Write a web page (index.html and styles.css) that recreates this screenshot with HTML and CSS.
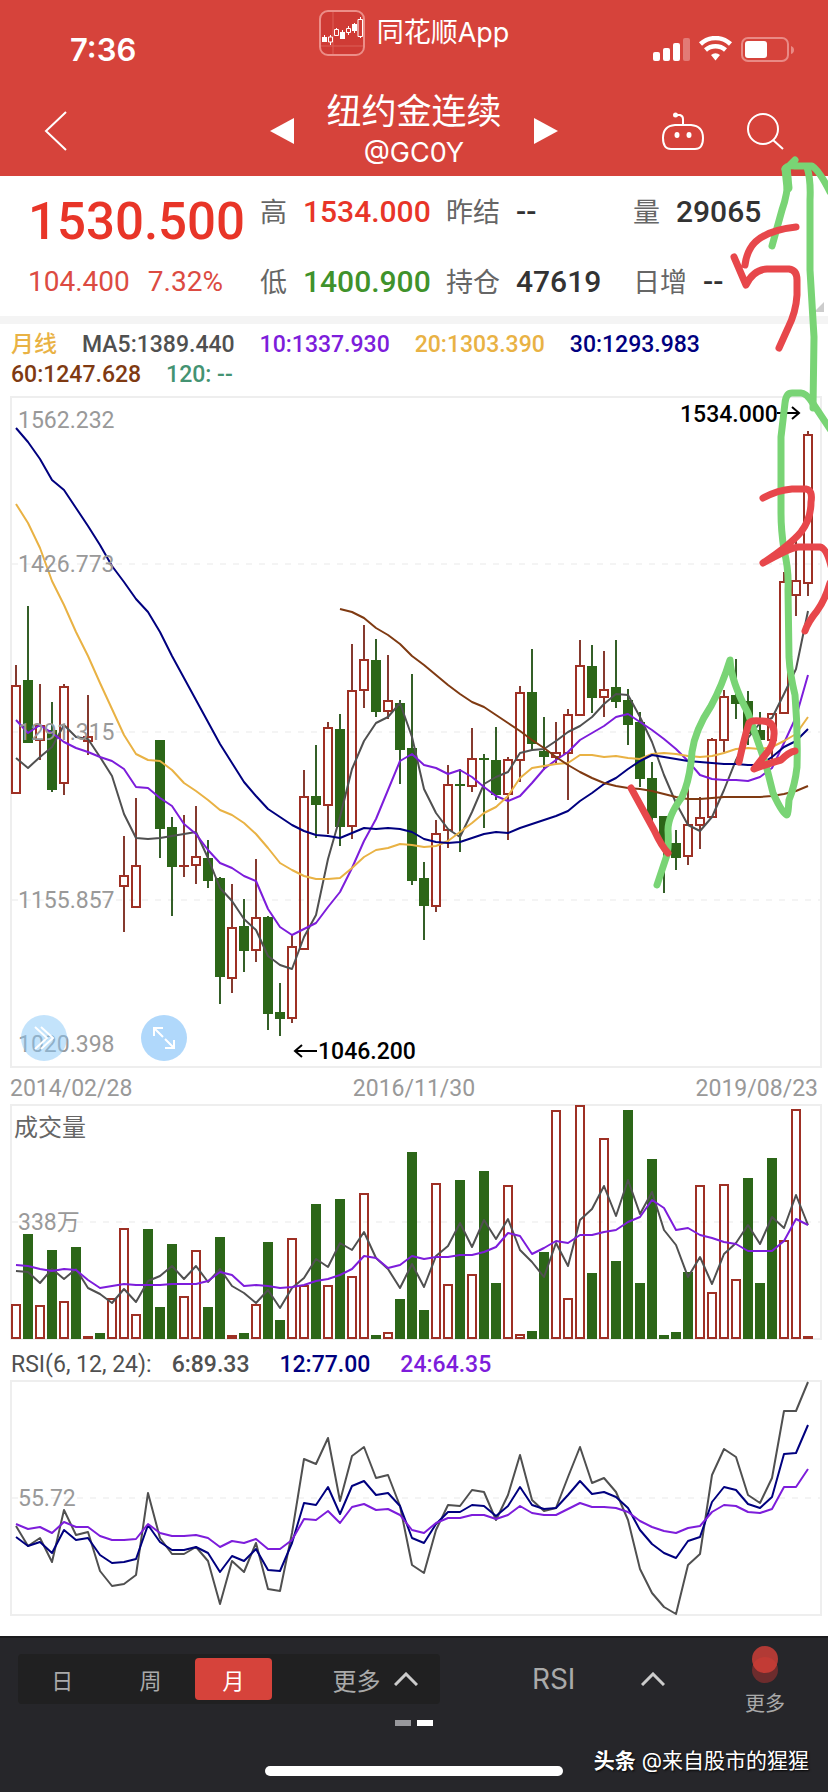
FILE: index.html
```html
<!doctype html>
<html lang="zh-CN">
<head>
  <meta charset="utf-8">
  <meta name="viewport" content="width=device-width, initial-scale=1">
  <title>纽约金连续</title>
  <link rel="stylesheet" href="styles.css">
</head>
<body>
<div class="page">

  <header class="header">
    <div class="status">
      <span class="clock">7:36</span>
      <div class="brand">
        <svg class="brand-icon" viewBox="0 0 46 46" width="46" height="46">
          <rect x="1" y="1" width="44" height="44" rx="8" fill="#cf3b35" stroke="#ec8e88" stroke-width="2"/>
          <path d="M14 2v42M2 36h42" stroke="#dc6059" stroke-width="1"/>
          <path d="M5.500 25v7M11.500 25v10M17.500 18v8M23.500 20v9M29.500 16v9M35.500 13v10M41.500 7v21" stroke="#fff" stroke-width="1"/>
          <path d="M3 27h5v5h-5zM21 22h5v7h-5zM33 14h5v7h-5z" fill="#fff"/>
          <path d="M9.500 27h4v5h-4zM15.500 19.500h4v6h-4zM27.500 18.500h4v4h-4zM39 9.500h4.500v17h-4.500z" fill="#cf3b35" stroke="#fff" stroke-width="1"/>
        </svg>
        <span>同花顺App</span>
      </div>
      <svg class="status-icons" viewBox="0 0 142 28" width="142" height="28">
        <g fill="#fff">
          <rect x="1" y="16" width="7" height="9" rx="2"/>
          <rect x="11" y="12" width="7" height="13" rx="2"/>
          <rect x="21" y="7" width="7" height="18" rx="2"/>
          <rect x="31" y="2" width="7" height="23" rx="2" opacity=".3"/>
          <path d="M59 19a7 7 0 0 1 9 0l-4.500 5.500z"/>
        </g>
        <path d="M48.500 9a22 22 0 0 1 30 0M53.500 15a15 15 0 0 1 20 0" transform="translate(0 -1)" fill="none" stroke="#fff" stroke-width="4.500"/>
        <rect x="90" y="2" width="46" height="23" rx="6" fill="none" stroke="#e98a85" stroke-width="2"/>
        <rect x="93" y="5" width="22" height="17" rx="3" fill="#fff"/>
        <path d="M139 10q3 1 3 4t-3 4z" fill="#e98a85"/>
      </svg>
    </div>
    <nav class="nav">
      <button class="icon-btn back" aria-label="返回">
        <svg viewBox="0 0 24 40" width="24" height="40"><path d="M22 1L2 20l20 19" fill="none" stroke="#fff" stroke-width="2"/></svg>
      </button>
      <div class="switcher">
        <button class="icon-btn" aria-label="上一个">
          <svg viewBox="0 0 24 26" width="24" height="26"><path d="M24 0v26L0 13z" fill="#fff"/></svg>
        </button>
        <div class="title">
          <h1>纽约金连续</h1>
          <span>@GC0Y</span>
        </div>
        <button class="icon-btn" aria-label="下一个">
          <svg viewBox="0 0 24 26" width="24" height="26"><path d="M0 0v26l24-13z" fill="#fff"/></svg>
        </button>
      </div>
      <div class="nav-right">
        <button class="icon-btn" aria-label="助手">
          <svg viewBox="0 0 42 38" width="42" height="38" fill="none" stroke="#fff" stroke-width="2">
            <path d="M21 13V7q0-3-3-4h-4M13 13h16q12 1 12 13 0 11-8 11H9Q1 37 1 26 1 14 13 13z"/>
            <circle cx="13.500" cy="3" r="2.500" fill="#fff" stroke="none"/>
            <ellipse cx="15" cy="23" rx="2.500" ry="3" fill="#fff" stroke="none"/>
            <ellipse cx="27" cy="23" rx="2.500" ry="3" fill="#fff" stroke="none"/>
          </svg>
        </button>
        <button class="icon-btn" aria-label="搜索">
          <svg viewBox="0 0 38 38" width="38" height="38" fill="none" stroke="#fff" stroke-width="2">
            <circle cx="17" cy="17" r="15"/><path d="M27 28l10 9"/>
          </svg>
        </button>
      </div>
    </nav>
  </header>

  <section class="quote">
    <div class="quote-main">
      <strong class="price">1530.500</strong>
      <div class="change"><span>104.400</span><span>7.32%</span></div>
    </div>
    <div class="quote-col">
      <div><span class="key">高</span><b class="up">1534.000</b></div>
      <div><span class="key">低</span><b class="down">1400.900</b></div>
    </div>
    <div class="quote-col">
      <div><span class="key">昨结</span><b>--</b></div>
      <div><span class="key">持仓</span><b>47619</b></div>
    </div>
    <div class="quote-col">
      <div><span class="key">量</span><b>29065</b></div>
      <div><span class="key">日增</span><b>--</b></div>
    </div>
    <i class="corner"></i>
  </section>

  <main>
    <div class="legend">
      <span class="c-gold">月线</span>
      <span class="c-gray">MA5:1389.440</span>
      <span class="c-purple">10:1337.930</span>
      <span class="c-gold">20:1303.390</span>
      <span class="c-navy">30:1293.983</span>
      <span class="c-brown">60:1247.628</span>
      <span class="c-teal">120: --</span>
    </div>

    <div class="chart-wrap">
      <svg class="chart" id="kline" viewBox="0 396 828 672">
        <rect class="frame" x="11" y="397" width="810" height="670"/>
        <path class="grid" d="M12 564H820M12 732H820M12 900H820"/>
        <g class="data"></g>
        <g class="label">
          <text x="18" y="428">1562.232</text>
          <text x="18" y="572">1426.773</text>
          <text x="18" y="740">1291.315</text>
          <text x="18" y="908">1155.857</text>
          <text x="18" y="1052">1020.398</text>
        </g>
        <g class="mark">
          <text x="680" y="422">1534.000</text>
          <path d="M777 413h22M792 407l7 6-7 6"/>
          <text x="318" y="1059">1046.200</text>
          <path d="M317 1051h-22M302 1045l-7 6 7 6"/>
        </g>
      </svg>
      <button class="tool tool-next" aria-label="快进">
        <svg viewBox="0 0 46 46" width="46" height="46"><path d="M14 12l12 11-12 11M20 12l12 11-12 11"/></svg>
      </button>
      <button class="tool tool-full" aria-label="全屏">
        <svg viewBox="0 0 46 46" width="46" height="46"><path d="M13 21v-8h9M13 13l9 9M33 25v8h-9M33 33l-9-9"/></svg>
      </button>
    </div>

    <div class="dates">
      <span>2014/02/28</span><span>2016/11/30</span><span>2019/08/23</span>
    </div>

    <svg class="chart" id="volume" viewBox="0 1104 828 236">
      <rect class="frame" x="11" y="1105" width="810" height="234"/>
      <path class="grid" d="M12 1222H820"/>
      <g class="data"></g>
      <text class="vol-title" x="14" y="1136">成交量</text>
      <text class="label" x="18" y="1230">338万</text>
    </svg>

    <div class="legend rsi-legend">
      <span class="c-gray">RSI(6, 12, 24):</span>
      <span class="c-gray">6:89.33</span>
      <span class="c-navy">12:77.00</span>
      <span class="c-purple">24:64.35</span>
    </div>

    <svg class="chart" id="rsi" viewBox="0 1380 828 236">
      <rect class="frame" x="11" y="1381" width="810" height="234"/>
      <path class="grid" d="M12 1498H820"/>
      <g class="data"></g>
      <text class="label" x="18" y="1506">55.72</text>
    </svg>
  </main>

  <footer class="footer">
    <div class="toolbar">
      <div class="periods">
        <button>日</button>
        <button>周</button>
        <button class="active">月</button>
        <button class="more">更多
          <svg viewBox="0 0 24 14" width="24" height="14"><path d="M1 13L12 2l11 11"/></svg>
        </button>
      </div>
      <button class="indicator">RSI
        <svg viewBox="0 0 24 14" width="24" height="14"><path d="M1 13L12 2l11 11"/></svg>
      </button>
      <button class="menu">
        <svg viewBox="0 0 26 38" width="26" height="38">
          <circle cx="13" cy="24" r="13" fill="#6d2c2d"/>
          <circle cx="13" cy="13" r="13" fill="#b23a35"/>
          <path d="M1 19a13 13 0 0 1 24 0 13 13 0 0 1-24 0z" fill="#c23b35"/>
        </svg>
        更多
      </button>
    </div>
    <div class="dots"><i></i><i class="on"></i></div>
    <div class="bottom">
      <div class="home-bar"></div>
      <div class="credit"><b>头条</b> @来自股市的猩猩</div>
    </div>
  </footer>

  <!-- hand drawn wave count -->
  <svg class="ink" viewBox="0 0 828 1792">
    <g stroke="#79d475">
      <path d="M772 246L782 210Q790 187 787 168L795 160M785 169Q787 165 795 166H812Q819 170 830 192"/>
      <path stroke-width="9" d="M786 169L788 188"/>
      <path d="M807 167Q811 180 810 200V270L814 337L813 408"/>
      <path d="M832 432L812 402Q806 393 801 393H792Q786 393 785 403L781 437V513Q781 530 784 550Q789 570 788 590L789 657Q790 675 795 695Q798 730 797 767Q795 785 789 800Q788 815 787 815Q783 815 773 793L766 765L748 713Q731 681 730 660Q722 686 711 706Q695 730 692 752Q690 780 682 797Q668 816 668 830Q669 845 667 855L657 885"/>
    </g>
    <g stroke="#e7474b">
      <path d="M796 227Q760 231 750 249Q746 256 745 265M734 257L746 285Q753 270 767 269H789Q797 270 797 280V295Q796 312 788 328L779 348"/>
      <path d="M763 498Q778 490 792 489H806Q813 490 811 502Q811 519 801 532Q790 545 763 563Q790 548 798 547H820Q827 548 832 570M830 583Q825 600 817 611Q808 622 805 631"/>
      <path d="M739 762Q745 735 749 723Q751 720 760 721Q773 720 774 731Q775 745 765 755L754 769Q770 763 781 760Q789 752 795 751"/>
      <path d="M631 788L654 830Q662 847 668 853"/>
    </g>
  </svg>
</div>
<script src="script.js"></script>
</body>
</html>
```
FILE: styles.css
```css
* {
  box-sizing: border-box;
}

body {
  margin: 0;
  background: #fff;
  color: #333;
  font-family: Roboto, "Noto Sans CJK SC", sans-serif;
}

button {
  padding: 0;
  border: 0;
  background: none;
  color: inherit;
  font: inherit;
}

svg {
  display: block;
}

.page {
  position: relative;
  overflow: hidden;
}

/* header */
.header {
  height: 176px;
  background: #d6433b;
  color: #fff;
}

.status {
  display: grid;
  grid-template-columns: 1fr auto 1fr;
  height: 86px;
  padding: 10px 34px 0 70px;
}

.clock {
  padding-top: 20px;
  font: 600 31px/40px Inter, sans-serif;
}

.brand {
  display: flex;
  align-items: center;
  align-self: start;
  gap: 12px;
  margin-right: 36px;
  font: 400 27px/46px Inter, "Noto Sans CJK SC", sans-serif;
}

.status-icons {
  justify-self: end;
  margin-top: 26px;
}

.nav {
  display: grid;
  grid-template-columns: 1fr auto 1fr;
  align-items: center;
  height: 90px;
  padding: 0 44px;
}

.back {
  justify-self: start;
}

.switcher {
  display: flex;
  align-items: center;
  gap: 32px;
}

.title {
  text-align: center;
  font: 400 27px/44px Inter, sans-serif;
}

.title h1 {
  margin: 0;
  font: 400 35px/44px "Noto Sans CJK SC", sans-serif;
}

.title span {
  display: block;
}

.nav-right {
  display: flex;
  align-items: center;
  justify-self: end;
  gap: 42px;
}

/* quote */
.quote {
  position: relative;
  display: grid;
  grid-template-columns: 232fr 186fr 187fr 195fr;
  height: 148px;
  padding: 0 0 0 28px;
  border-bottom: 8px solid #f4f4f4;
}

.quote-main {
  padding-top: 16px;
  color: #dc4b42;
}

.price {
  display: block;
  color: #e83528;
  font-size: 51px;
  font-weight: 500;
  line-height: 60px;
}

.change {
  display: flex;
  gap: 18px;
  margin-top: 10px;
  font-size: 28px;
  line-height: 40px;
}

.quote-col > div {
  display: flex;
  align-items: center;
  gap: 16px;
  height: 70px;
}

.key {
  color: #666;
  font: 400 27px/40px "Noto Sans CJK SC", sans-serif;
}

.quote-col b {
  font-size: 30px;
  font-weight: 500;
}

.quote-col .up {
  color: #e83528;
}

.quote-col .down {
  color: #40922b;
}

.corner {
  position: absolute;
  right: 4px;
  bottom: 4px;
  border-bottom: 10px solid #ccc;
  border-left: 10px solid transparent;
}

/* charts */
.legend {
  display: flex;
  flex-wrap: wrap;
  align-content: center;
  column-gap: 25px;
  min-height: 72px;
  padding: 0 11px;
  font-size: 23px;
  font-weight: 500;
  line-height: 30px;
}

.rsi-legend {
  column-gap: 30px;
  min-height: 40px;
  padding-top: 10px;
}

.rsi-legend .c-gray:first-child {
  margin-right: -10px;
  font-weight: 400;
}

.c-gold { color: #e9b244; }
.c-gray { color: #505050; }
.c-purple { color: #7d1ddb; }
.c-navy { color: #00007f; }
.c-brown { color: #7f3a12; }
.c-teal { color: #449372; }

.chart-wrap {
  position: relative;
}

.chart {
  width: 100%;
}

.frame {
  fill: none;
  stroke: #eee;
  stroke-width: 2;
}

.grid {
  stroke: #f4f4f4;
  stroke-width: 2;
  stroke-dasharray: 6 7;
}

.red {
  fill: none;
  stroke: #9e3024;
  stroke-width: 2;
}

.red.flat {
  fill: #9e3024;
  stroke: none;
}

.wick-red { stroke: #853a2f; stroke-width: 2; }
.wick-green { stroke: #345f28; stroke-width: 2; }
.green { fill: #2c6618; }

.line {
  fill: none;
  stroke-width: 2;
  stroke-linejoin: round;
}

.label {
  fill: #999;
  font-size: 23px;
}

.mark {
  fill: #000;
  font-size: 23px;
  font-weight: 500;
}

.mark path {
  fill: none;
  stroke: #000;
  stroke-width: 2;
}

.vol-title {
  fill: #666;
  font-size: 24px;
}

.tool {
  position: absolute;
  bottom: 7px;
  width: 46px;
  height: 46px;
  border-radius: 50%;
  background: #b0d8fb;
}

.tool path {
  fill: none;
  stroke: #fff;
  stroke-width: 2;
}

.tool-next {
  left: 21px;
  background: rgba(135, 200, 248, .5);
}

.tool-full {
  left: 141px;
}

.dates {
  display: flex;
  justify-content: space-between;
  padding: 6px 10px 0;
  color: #999;
  font-size: 23px;
  line-height: 30px;
}

/* footer */
.footer {
  height: 156px;
  margin-top: 20px;
  border-top: 2px solid #1b1b1d;
  background: #26262a;
  color: #aaa;
  font-family: Inter, "Noto Sans CJK SC", sans-serif;
}

.toolbar {
  display: flex;
  align-items: flex-start;
  height: 80px;
  padding: 8px 43px 0 18px;
}

.periods {
  display: grid;
  flex: none;
  grid-template-columns: 88fr 88fr 77fr 167fr;
  width: 55%;
  height: 50px;
  margin-top: 8px;
  padding: 4px 0;
  border-radius: 4px;
  background: #202021;
  font-size: 22px;
}

.periods .active {
  border-radius: 4px;
  background: #d6433b;
  color: #fff;
}

.periods .more {
  display: flex;
  align-items: center;
  justify-content: center;
  gap: 14px;
  padding-left: 39px;
  font-size: 24px;
}

.footer button path[d^="M1 13"] {
  fill: none;
  stroke: #ccc;
  stroke-width: 3;
}

.indicator {
  display: flex;
  align-items: center;
  gap: 66px;
  height: 50px;
  margin: 8px 0 0 12%;
  font-size: 28px;
}

.menu {
  display: flex;
  flex-direction: column;
  align-items: center;
  gap: 5px;
  margin-left: auto;
  font-size: 20px;
  line-height: 30px;
}

.dots {
  display: flex;
  justify-content: center;
  gap: 6px;
  margin-top: 2px;
}

.dots i {
  width: 16px;
  height: 6px;
  background: #98989c;
}

.dots .on {
  background: #fff;
}

.bottom {
  display: grid;
  grid-template-columns: 1fr 36% 1fr;
  align-items: center;
  margin-top: 19px;
}

.home-bar {
  grid-column: 2;
  height: 10px;
  margin-top: 20px;
  border-radius: 5px;
  background: #fff;
}

.credit {
  justify-self: end;
  padding-right: 19px;
  color: #fff;
  font-size: 21px;
  line-height: 32px;
  white-space: nowrap;
  text-shadow: 1px 1px 2px #000;
}

/* ink sits over everything */
.ink {
  position: absolute;
  top: 0;
  left: 0;
  width: 100%;
  pointer-events: none;
}

.ink path {
  fill: none;
  stroke-linecap: round;
  stroke-linejoin: round;
}

.ink g {
  stroke-width: 7;
}
```
FILE: script.js
```javascript
const STEP = 12;
const FIRST = 16;
const x = (i) => FIRST + STEP * i;

const GRAY = "#505050";
const PURPLE = "#7d1ddb";
const GOLD = "#e9b244";
const NAVY = "#00007f";
const BROWN = "#7f3a12";

// index, colour, high, body top, body bottom, low
const candles = [
  [0, "r", 665, 685, 794, 794], [1, "g", 606, 680, 743, 743], [2, "r", 684, 725, 741, 760],
  [3, "g", 702, 730, 790, 792], [4, "r", 684, 686, 784, 795], [6, "r", 695, 736, 742, 755],
  [9, "r", 836, 875, 887, 932], [10, "r", 798, 865, 908, 908], [12, "g", 740, 740, 829, 858],
  [13, "g", 817, 827, 867, 916], [14, "r", 815, 865, 867, 877], [15, "r", 806, 856, 866, 884],
  [16, "g", 840, 858, 881, 888], [17, "g", 877, 878, 977, 1004], [18, "r", 884, 927, 979, 993],
  [19, "g", 899, 926, 951, 972], [20, "r", 859, 917, 951, 962], [21, "g", 916, 917, 1014, 1030],
  [22, "g", 983, 1012, 1019, 1036], [23, "r", 935, 946, 1019, 1023], [24, "r", 770, 796, 950, 950],
  [25, "g", 745, 796, 805, 838], [26, "r", 722, 727, 806, 834], [27, "g", 714, 729, 827, 846],
  [28, "r", 644, 690, 827, 839], [29, "r", 625, 659, 691, 708], [30, "g", 639, 660, 712, 717],
  [31, "r", 655, 700, 712, 719], [32, "g", 700, 703, 750, 784], [33, "g", 674, 748, 881, 885],
  [34, "g", 862, 878, 906, 940], [35, "r", 820, 833, 907, 912], [36, "r", 765, 784, 831, 848],
  [37, "g", 769, 784, 786, 852], [38, "r", 728, 758, 787, 792], [39, "g", 754, 758, 760, 828],
  [40, "g", 727, 760, 795, 800], [41, "r", 757, 759, 795, 840], [42, "r", 686, 692, 761, 782],
  [43, "g", 649, 692, 744, 750], [44, "g", 717, 751, 757, 770], [45, "r", 722, 752, 758, 763],
  [46, "r", 709, 714, 754, 800], [47, "r", 640, 665, 716, 716], [48, "g", 645, 666, 698, 713],
  [49, "r", 651, 689, 698, 717], [50, "g", 640, 687, 702, 708], [51, "g", 689, 700, 725, 745],
  [52, "g", 712, 722, 779, 787], [53, "g", 762, 778, 818, 832], [54, "g", 816, 816, 847, 893],
  [55, "g", 830, 843, 858, 870], [56, "r", 788, 824, 857, 865], [57, "r", 797, 817, 826, 849],
  [58, "r", 738, 739, 818, 818], [59, "r", 690, 696, 741, 752], [60, "g", 659, 695, 704, 719],
  [61, "g", 691, 701, 734, 745], [62, "g", 712, 730, 740, 745], [63, "r", 713, 713, 741, 763],
  [64, "r", 572, 581, 714, 714], [65, "r", 538, 580, 596, 616], [66, "r", 431, 434, 584, 596],
];

const averages = [
  { color: GRAY, from: 0, y: [758,768,757,747,725,737,739,757,776,814,838,839,838,836,834,832,858,888,901,919,930,956,965,969,937,915,859,817,769,741,723,717,703,737,789,813,829,837,812,784,777,772,753,750,749,741,732,726,717,704,694,695,717,742,775,803,825,831,817,790,760,738,723,718,694,669,611] },
  { color: PURPLE, from: 0, y: [720,733,725,733,742,748,752,757,761,769,787,788,798,806,824,834,850,863,868,876,881,909,927,935,929,923,907,892,868,841,819,790,761,754,765,768,774,770,777,787,796,801,796,783,769,760,752,740,733,726,717,714,722,730,739,749,761,775,779,780,780,781,777,768,743,717,675] },
  { color: GOLD, from: 0, y: [504,523,548,581,605,632,656,683,709,735,754,760,761,770,783,791,800,810,815,823,834,848,863,870,876,879,879,878,868,857,850,848,844,845,847,846,841,832,823,813,807,796,778,768,766,764,763,755,755,757,756,758,759,754,753,754,756,757,756,753,749,748,749,747,741,734,717] },
  { color: NAVY, from: 0, y: [428,442,459,480,490,508,526,545,566,582,599,612,632,656,678,700,722,744,763,782,796,809,817,825,831,835,836,838,833,828,829,828,829,832,839,842,843,842,838,834,832,833,828,824,820,816,811,801,793,784,778,769,761,755,757,759,761,762,763,764,764,765,765,757,747,741,729] },
  { color: BROWN, from: 27, y: [609,612,618,628,635,644,656,665,675,685,694,702,707,715,723,731,740,748,757,765,772,778,783,786,788,789,791,794,797,799,799,798,797,797,797,797,796,794,791,786] },
];

const volumeColors = "rgrgrgrgrrrgggrrggrgrggrrgrgrrgrgggrrgrggrrggrrrgrgggggggrrrrgggrrrr";
const volumeTops = [1304,1234,1305,1250,1301,1247,1336,1333,1298,1228,1314,1229,1307,1244,1296,1250,1307,1237,1335,1333,1304,1242,1320,1238,1285,1204,1285,1199,1276,1193,1335,1332,1299,1152,1310,1183,1284,1180,1274,1171,1283,1185,1334,1331,1252,1110,1298,1105,1273,1138,1261,1110,1283,1159,1335,1332,1272,1185,1292,1184,1279,1178,1283,1158,1240,1109,1336];
const volumeLines = [
  { color: GRAY, from: 0, y: [1271,1272,1283,1269,1279,1269,1288,1294,1303,1289,1302,1281,1276,1266,1279,1266,1282,1269,1286,1293,1303,1290,1308,1288,1278,1259,1267,1243,1250,1232,1258,1269,1288,1264,1287,1256,1246,1223,1247,1220,1239,1219,1250,1262,1277,1243,1266,1220,1209,1186,1216,1180,1214,1192,1230,1245,1277,1257,1284,1254,1243,1225,1244,1217,1228,1195,1225] },
  { color: PURPLE, from: 0, y: [1265,1266,1269,1271,1269,1270,1280,1288,1286,1284,1285,1285,1285,1284,1284,1284,1281,1272,1275,1286,1285,1286,1288,1287,1285,1281,1279,1275,1269,1256,1258,1268,1265,1256,1259,1257,1257,1255,1255,1252,1247,1233,1236,1254,1248,1241,1243,1235,1235,1232,1230,1222,1217,1200,1208,1230,1228,1235,1238,1242,1244,1251,1251,1251,1241,1219,1225] },
];

const rsiLines = [
  { color: GRAY, from: 0, y: [1526,1546,1538,1562,1510,1535,1532,1571,1586,1584,1575,1493,1538,1554,1554,1547,1561,1604,1561,1572,1543,1589,1591,1533,1459,1464,1438,1501,1456,1447,1478,1475,1506,1565,1573,1530,1505,1506,1490,1492,1520,1495,1455,1500,1511,1508,1477,1447,1483,1478,1492,1520,1569,1593,1607,1614,1565,1554,1475,1449,1457,1495,1503,1478,1411,1411,1382] },
  { color: NAVY, from: 0, y: [1537,1546,1542,1553,1530,1540,1538,1555,1563,1562,1559,1525,1542,1550,1550,1547,1553,1572,1556,1561,1549,1570,1571,1543,1503,1505,1487,1514,1486,1481,1495,1493,1506,1538,1543,1524,1512,1512,1505,1506,1516,1506,1487,1505,1509,1508,1495,1481,1494,1492,1497,1508,1530,1544,1553,1558,1541,1537,1502,1487,1490,1504,1508,1497,1454,1453,1425] },
  { color: PURPLE, from: 0, y: [1524,1529,1527,1533,1522,1527,1527,1536,1540,1540,1539,1524,1533,1536,1536,1535,1538,1547,1541,1543,1539,1549,1549,1540,1519,1520,1511,1523,1507,1504,1510,1509,1515,1530,1533,1523,1518,1518,1515,1515,1519,1515,1506,1513,1515,1515,1509,1503,1507,1507,1508,1512,1521,1527,1531,1533,1528,1526,1512,1505,1506,1512,1513,1509,1487,1487,1469] },
];

function body(i, color, top, bottom) {
  if (color === "g") {
    return `<rect class="green" x="${x(i) - 5}" y="${top}" width="10" height="${bottom - top}"/>`;
  }
  if (bottom - top < 4) {
    return `<rect class="red flat" x="${x(i) - 5}" y="${top}" width="10" height="${bottom - top}"/>`;
  }
  return `<rect class="red" x="${x(i) - 4}" y="${top + 1}" width="8" height="${bottom - top - 2}"/>`;
}

function wick(i, color, from, to) {
  if (to <= from) return "";
  const name = color === "g" ? "wick-green" : "wick-red";
  return `<path class="${name}" d="M${x(i)} ${from}V${to}"/>`;
}

function line({ color, from, y }) {
  const points = y.map((value, n) => `${x(from + n)},${value}`).join(" ");
  return `<polyline class="line" stroke="${color}" points="${points}"/>`;
}

function draw(id, parts) {
  document.querySelector(`#${id} .data`).innerHTML = parts.join("");
}

draw("kline", [
  ...candles.map(([i, c, high, top, bottom, low]) =>
    wick(i, c, high, top) + wick(i, c, bottom, low) + body(i, c, top, bottom)),
  ...averages.map(line),
]);

draw("volume", [
  ...volumeTops.map((top, i) => body(i, volumeColors[i], top, 1339)),
  ...volumeLines.map(line),
]);

draw("rsi", rsiLines.map(line));
```
